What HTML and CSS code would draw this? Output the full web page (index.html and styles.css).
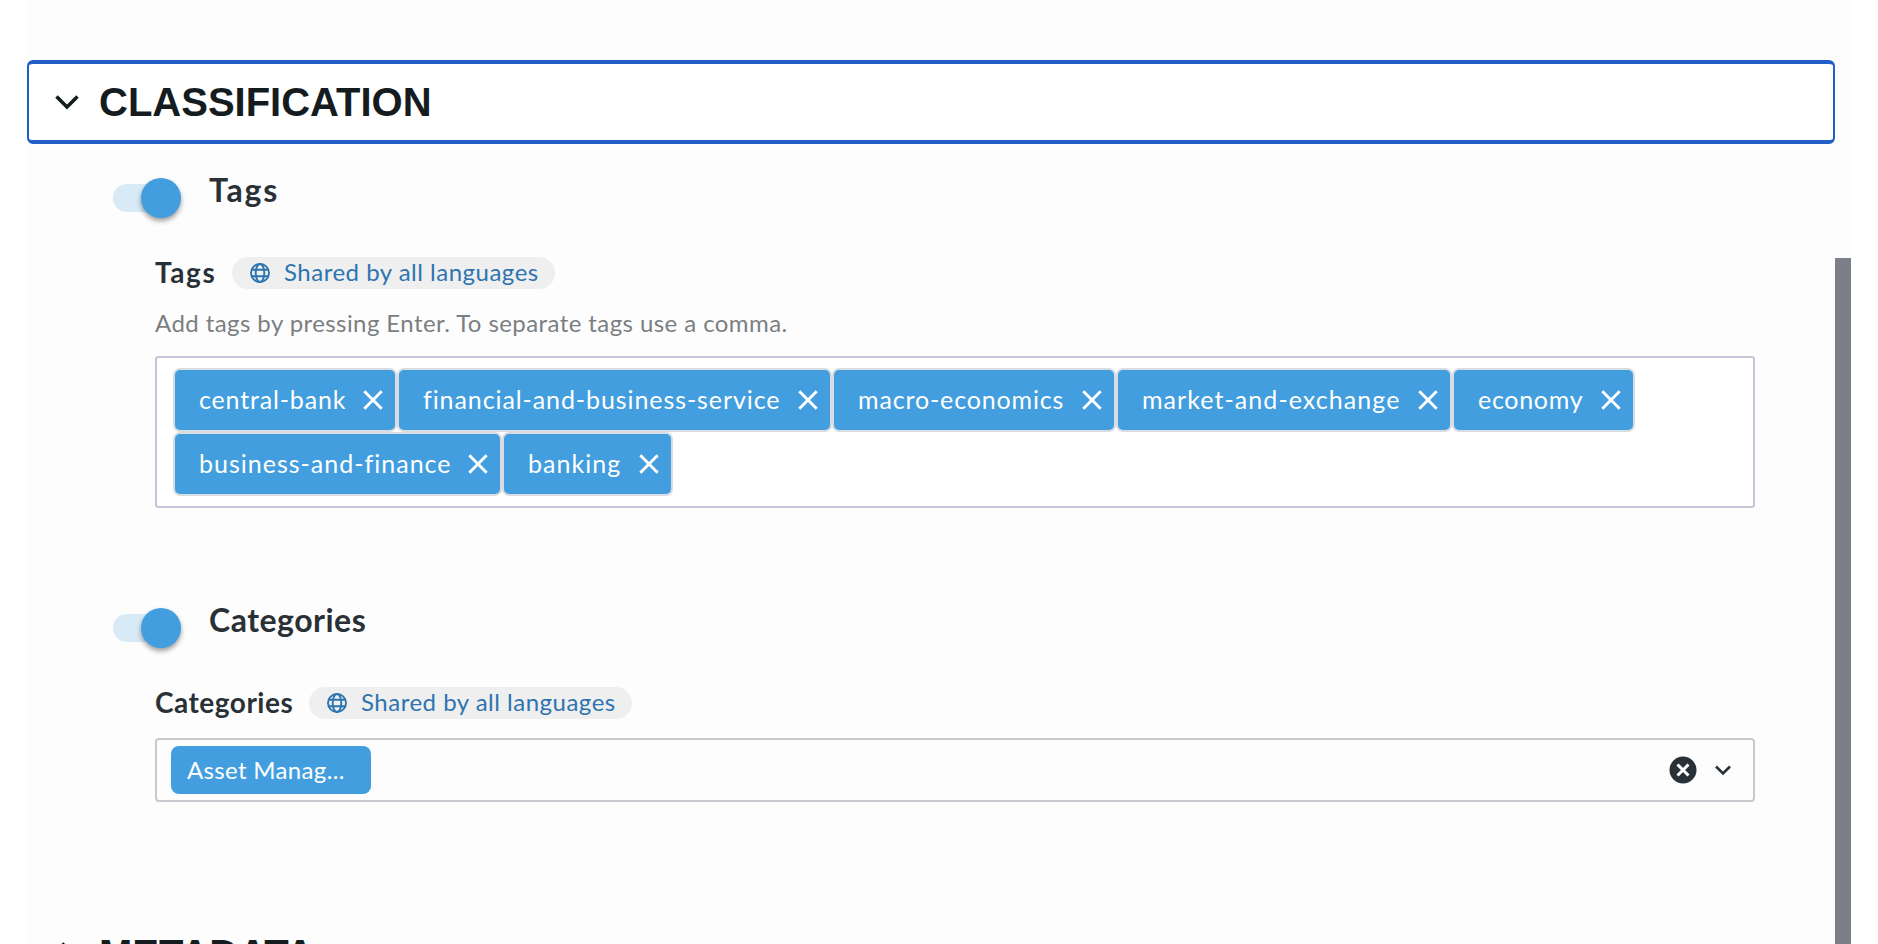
FILE: index.html
```html
<!DOCTYPE html>
<html lang="en">
<head>
<meta charset="utf-8">
<title>Classification</title>
<link rel="stylesheet" href="styles.css">
</head>
<body>
<svg class="defs" width="0" height="0">
  <symbol id="globe" viewBox="0 0 20 20"><g fill="none" stroke="currentColor" stroke-width="1.9"><circle cx="10" cy="10" r="9"/><ellipse cx="10" cy="10" rx="4.3" ry="9"/><path d="M1.6 6.8h16.8M1.6 13.2h16.8"/></g></symbol>
  <symbol id="close" viewBox="0 0 20 20"><path d="M1.3 1.3l17.4 17.4M18.7 1.3L1.3 18.7" fill="none" stroke="currentColor" stroke-width="2.9"/></symbol>
</svg>
<div class="page">
  <main class="panel">
    <header class="section-header focused">
      <svg class="chevron" width="24" height="16" viewBox="0 0 24 16"><path d="M1.5 2.5L12 13 22.5 2.5" fill="none" stroke="currentColor" stroke-width="3.6"/></svg>
      <h1 class="section-title">CLASSIFICATION</h1>
    </header>
    <section class="group">
      <div class="toggle-row">
        <span class="toggle"><span class="knob"></span></span>
        <h2 class="group-title wide">Tags</h2>
      </div>
      <div class="label-row">
        <span class="label wide">Tags</span>
        <span class="badge"><svg class="globe"><use href="#globe"/></svg><span class="badge-text">Shared by all languages</span></span>
      </div>
      <p class="hint">Add tags by pressing Enter. To separate tags use a comma.</p>
      <div class="tag-box">
        <span class="tag t1"><span class="tag-text">central-bank</span><svg class="close"><use href="#close"/></svg></span>
        <span class="tag t2"><span class="tag-text">financial-and-business-service</span><svg class="close"><use href="#close"/></svg></span>
        <span class="tag t3"><span class="tag-text">macro-economics</span><svg class="close"><use href="#close"/></svg></span>
        <span class="tag t4"><span class="tag-text">market-and-exchange</span><svg class="close"><use href="#close"/></svg></span>
        <span class="tag t5"><span class="tag-text">economy</span><svg class="close"><use href="#close"/></svg></span>
        <span class="tag t6"><span class="tag-text">business-and-finance</span><svg class="close"><use href="#close"/></svg></span>
        <span class="tag t7"><span class="tag-text">banking</span><svg class="close"><use href="#close"/></svg></span>
      </div>
    </section>
    <section class="group second">
      <div class="toggle-row">
        <span class="toggle"><span class="knob"></span></span>
        <h2 class="group-title">Categories</h2>
      </div>
      <div class="label-row">
        <span class="label">Categories</span>
        <span class="badge"><svg class="globe"><use href="#globe"/></svg><span class="badge-text">Shared by all languages</span></span>
      </div>
      <div class="select">
        <span class="option">Asset Manag...</span>
        <svg class="clear" width="28" height="28" viewBox="0 0 28 28"><circle cx="14" cy="14" r="13.5" fill="#2a3136"/><path d="M8.5 8.5l11 11M19.5 8.5l-11 11" stroke="#fff" stroke-width="3"/></svg>
        <svg class="caret" width="16" height="11" viewBox="0 0 16 11"><path d="M1 1.5l7 7 7-7" fill="none" stroke="#2a3136" stroke-width="2.6"/></svg>
      </div>
    </section>
    <header class="section-header next">
      <svg class="chevron side" width="24" height="24" viewBox="0 0 24 24"><path d="M7 1.5L17.5 12 7 22.5" fill="none" stroke="currentColor" stroke-width="3.6"/></svg>
      <h1 class="section-title">METADATA</h1>
    </header>
  </main>
  <div class="scrollbar"><div class="thumb"></div></div>
</div>
</body>
</html>
```
FILE: styles.css
```css
* { box-sizing: border-box; }
html, body { margin: 0; height: 100%; overflow: hidden; }
body { background: #fff; font: 24px/32px Lato, "Open Sans", sans-serif; color: #2a3136; }
h1, h2, p { margin: 0; }
svg { display: block; flex: none; }
.defs { position: absolute; }
.page { display: flex; height: 944px; margin: 0 27px; background: #fdfdfd; }
.panel { width: 1808px; height: 944px; padding-top: 60px; overflow: hidden; }
.scrollbar { width: 16px; padding-top: 258px; }
.thumb { height: 100%; background: #7c7f88; }
.section-header { display: flex; align-items: center; height: 84px; padding-left: 26px; gap: 20px; border: 2px solid transparent; border-width: 4px 2px; color: #151c1f; }
.focused { background: #fff; border-color: #205fc6; border-radius: 6px; }
.section-title { font: bold 40px/44px "Liberation Sans", Arial, sans-serif; }
.next { margin-top: 110px; }
.group { padding: 34px 80px 0 128px; }
.second { padding-top: 100px; }
.toggle-row { display: flex; height: 40px; margin-left: -42px; }
.toggle { display: flex; align-items: center; justify-content: flex-end; width: 68px; height: 28px; margin-top: 6px; border-radius: 14px; background: #d7eaf6; }
.knob { flex: none; width: 40px; height: 40px; border-radius: 50%; background: #429ede; box-shadow: 0 3px 5px rgba(0,0,0,.38); }
.group-title { margin: -8px 0 0 28px; font-size: 32px; line-height: 40px; font-weight: 700; letter-spacing: .5px; }
.group-title.wide { letter-spacing: 1.8px; }
.label-row { display: flex; align-items: center; height: 32px; margin-top: 39px; }
.label { width: 154px; padding-bottom: 2px; font-size: 28px; font-weight: 700; letter-spacing: .5px; }
.label.wide { width: 77px; letter-spacing: 1.6px; }
.badge { display: flex; align-items: center; width: 323px; height: 32px; padding-left: 18px; gap: 14px; border-radius: 16px; background: #efefef; color: #2d74b0; letter-spacing: .5px; white-space: nowrap; }
.badge-text { padding-bottom: 2px; }
.globe { width: 20px; height: 20px; }
.hint { margin-top: 18px; color: #7b7f82; letter-spacing: .42px; }
.tag-box { display: flex; flex-wrap: wrap; align-content: flex-start; height: 152px; margin-top: 17px; padding: 10px 80px 0 16px; border: 2px solid #c3c6d6; border-radius: 3px; background: #fff; }
.tag { display: flex; align-items: center; justify-content: space-between; height: 64px; padding: 0 12px 0 24px; border: 2px solid #d9dde1; border-radius: 7px; background: #429ede; color: #fff; font-size: 25px; white-space: nowrap; }
.tag-text { padding-bottom: 2px; }
.close { width: 20px; height: 20px; }
.t1 { width: 224px; letter-spacing: .83px; }
.t2 { width: 435px; letter-spacing: .91px; }
.t3 { width: 284px; letter-spacing: .85px; }
.t4 { width: 336px; letter-spacing: 1.06px; }
.t5 { width: 183px; letter-spacing: .7px; }
.t6 { width: 329px; letter-spacing: 1px; }
.t7 { width: 171px; letter-spacing: 1.05px; }
.select { display: flex; align-items: center; height: 64px; margin-top: 19px; padding: 0 22px 0 14px; border: 2px solid #c9c9cf; border-radius: 4px; }
.option { width: 200px; height: 48px; padding-left: 16px; border-radius: 8px; background: #429ede; color: #fff; line-height: 47px; letter-spacing: .33px; }
.clear { margin-left: auto; }
.caret { margin-left: 18px; }
```
